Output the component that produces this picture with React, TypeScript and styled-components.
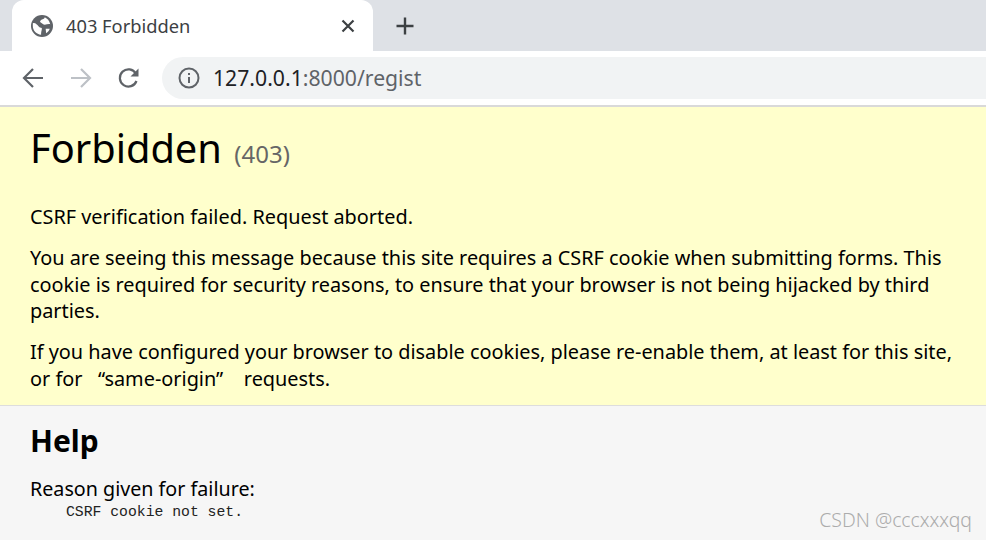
import styled, { createGlobalStyle } from 'styled-components';

const GlobalStyle = createGlobalStyle`
  html, body {
    margin: 0;
    padding: 0;
    height: 100%;
    overflow: hidden;
    background: #f6f6f6;
  }
  body {
    font-family: "Noto Sans", "Open Sans", sans-serif;
    color: #000;
  }
`;

const TabStrip = styled.div`
  height: 51px;
  background: #dee1e6;
  display: flex;
  align-items: flex-end;
  padding-left: 12px;
`;

const Tab = styled.div`
  width: 361px;
  height: 51px;
  box-sizing: border-box;
  background: #fff;
  border-radius: 12px 12px 0 0;
  display: flex;
  align-items: center;
  padding: 0 13px 0 19px;
  gap: 13px;
`;

const Favicon = styled.svg`
  width: 22px;
  height: 22px;
  flex: none;
`;

const TabTitle = styled.span`
  flex: 1;
  font-size: 18.3px;
  color: #3c4043;
`;

const NewTab = styled.div`
  width: 32px;
  height: 51px;
  margin-left: 16px;
  display: flex;
  align-items: center;
  justify-content: center;
`;

const Toolbar = styled.div`
  height: 54px;
  background: #fff;
  display: flex;
  align-items: center;
  padding-left: 21px;
  gap: 24px;
  border-bottom: 2px solid #d9d9d9;
`;

const NavIcon = styled.svg`
  width: 24px;
  height: 24px;
  flex: none;
`;

const Omnibox = styled.div`
  flex: 1;
  height: 42px;
  margin-left: -3px;
  border-radius: 21px 0 0 21px;
  background: #f1f3f4;
  display: flex;
  align-items: center;
  padding-left: 15px;
  gap: 12px;
  font-size: 21.2px;
  color: #5f6368;
`;

const OmniText = styled.span`
  margin-top: -2px;
`;

const Host = styled.span`
  color: #202124;
`;

const Summary = styled.section`
  background: #ffc;
  border-bottom: 1px solid #ddd;
  box-sizing: border-box;
  height: 299px;
  padding: 13px 30px 0;
`;

const Title = styled.h1`
  margin: 0 0 22px;
  font-size: 39.8px;
  line-height: 56px;
  font-weight: 400;
`;

const Code = styled.span`
  font-size: 24px;
  margin-left: 2px;
  color: #666;
`;

const Paragraph = styled.p`
  margin: 0 0 14.5px;
  font-size: 19.88px;
  line-height: 26.5px;
`;

const Info = styled.section`
  position: relative;
  background: #f6f6f6;
  height: 135px;
  padding: 15px 30px 0;
  box-sizing: border-box;
`;

const HelpTitle = styled.h2`
  margin: 0 0 15px;
  font-size: 30px;
  line-height: 40px;
  font-weight: 700;
`;

const Reason = styled.div`
  font-size: 19.7px;
  line-height: 26px;
`;

const Mono = styled.pre`
  margin: 0;
  font-family: "Liberation Mono", monospace;
  font-size: 14.75px;
  line-height: 20px;
  color: #222;
  padding-left: 36px;
`;

const Watermark = styled.span`
  position: absolute;
  right: 14px;
  bottom: 8px;
  font-size: 19.4px;
  font-weight: 300;
  color: #acacac;
`;

export default function App() {
  return (
    <>
      <GlobalStyle />
      <TabStrip>
        <Tab>
          <Favicon viewBox="0 0 24 24">
            <circle cx="12" cy="12" r="12" fill="#5f6368" />
            <path d="M2 9c2-1 3 0 5 2s2 3 4 3 0 3 0 7.500C6 21 2 17 2 12z" fill="#fff" />
            <path d="M15 2.500c0 2-3 2-4 3s-2 2 0 3 2 2 4 2 4-1 6-.5C20 6 18 4 15 2.500zM16 15h4.500c-.7 2-2 3.500-4 4.800z" fill="#fff" />
          </Favicon>
          <TabTitle>403 Forbidden</TabTitle>
          <NavIcon viewBox="0 0 24 24">
            <path d="M6.500 6.500l11 11M17.500 6.500l-11 11" stroke="#3c4043" strokeWidth="2.200" fill="none" />
          </NavIcon>
        </Tab>
        <NewTab>
          <NavIcon viewBox="0 0 24 24">
            <path d="M12 3.500v17M3.500 12h17" stroke="#3c4043" strokeWidth="2.400" fill="none" />
          </NavIcon>
        </NewTab>
      </TabStrip>
      <Toolbar>
        <NavIcon viewBox="0 0 24 24">
          <path d="M22 12H3.500M12 3l-9 9 9 9" stroke="#5f6368" strokeWidth="2.200" fill="none" />
        </NavIcon>
        <NavIcon viewBox="0 0 24 24">
          <path d="M2 12h18.500M12 3l9 9-9 9" stroke="#bdc1c6" strokeWidth="2.200" fill="none" />
        </NavIcon>
        <NavIcon viewBox="0 0 24 24">
          <path d="M19.500 15a8.600 8.600 0 1 1-.6-7.400" stroke="#5f6368" strokeWidth="2.200" fill="none" />
          <path d="M21.500 2.500v8h-8z" fill="#5f6368" />
        </NavIcon>
        <Omnibox>
          <NavIcon viewBox="0 0 24 24">
            <circle cx="12" cy="12" r="9.500" stroke="#5f6368" strokeWidth="2" fill="none" />
            <path d="M12 11v6M12 7v2" stroke="#5f6368" strokeWidth="2" fill="none" />
          </NavIcon>
          <OmniText>
            <Host>127.0.0.1</Host>:8000/regist
          </OmniText>
        </Omnibox>
      </Toolbar>
      <Summary>
        <Title>
          Forbidden <Code>(403)</Code>
        </Title>
        <Paragraph>CSRF verification failed. Request aborted.</Paragraph>
        <Paragraph>
          You are seeing this message because this site requires a CSRF cookie when submitting forms. This
          cookie is required for security reasons, to ensure that your browser is not being hijacked by third
          parties.
        </Paragraph>
        <Paragraph>
          If you have configured your browser to disable cookies, please re-enable them, at least for this site,
          or for{'\u00a0\u00a0\u00a0'}“same-origin”{'\u00a0\u00a0\u00a0\u00a0'}requests.
        </Paragraph>
      </Summary>
      <Info>
        <HelpTitle>Help</HelpTitle>
        <Reason>Reason given for failure:</Reason>
        <Mono>CSRF cookie not set.</Mono>
        <Watermark>CSDN @cccxxxqq</Watermark>
      </Info>
    </>
  );
}
